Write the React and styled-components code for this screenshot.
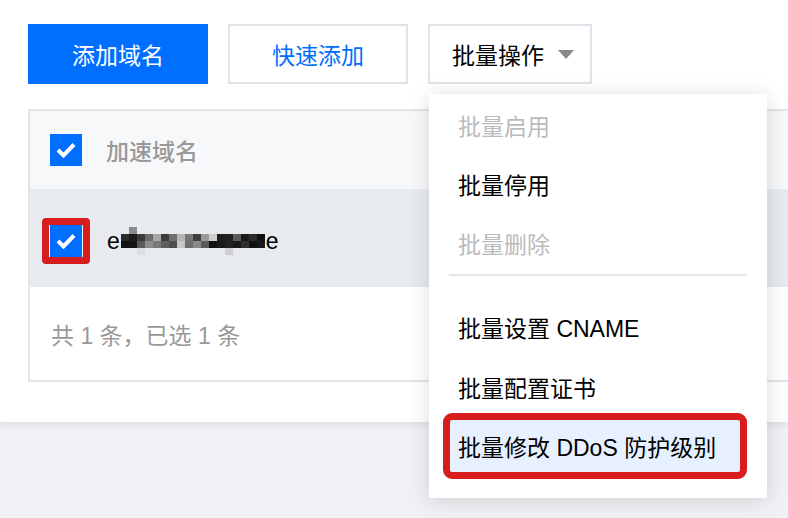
import React from "react";
import styled, { createGlobalStyle } from "styled-components";

const GlobalStyle = createGlobalStyle`
  html, body {
    margin: 0;
    background: #f0f1f4;
    overflow: hidden;
  }
  body {
    font-family: "Liberation Sans", "Noto Sans CJK SC", sans-serif;
  }
`;

const Page = styled.div`
  position: relative;
  height: 518px;
`;

const Panel = styled.div`
  background: #fff;
  height: 422px;
  box-sizing: border-box;
  padding: 24px 0 0 28px;
  box-shadow: 0 2px 8px rgba(0, 0, 0, 0.1);
  overflow: hidden;
`;

const Toolbar = styled.div`
  display: flex;
  gap: 20px;
  height: 60px;
`;

const Button = styled.button`
  height: 60px;
  width: ${(p) => p.$width || "180px"};
  box-sizing: border-box;
  border: ${(p) => (p.$primary ? "none" : "2px solid #dfe2e8")};
  background: ${(p) => (p.$primary ? "#006eff" : "#fff")};
  color: ${(p) => (p.$primary ? "#fff" : p.$dark ? "#000" : "#006eff")};
  font-family: inherit;
  font-size: 23px;
  display: flex;
  align-items: center;
  justify-content: ${(p) => (p.$left ? "flex-start" : "center")};
  padding: ${(p) => (p.$left ? "0 0 0 22px" : "0")};
  gap: 14px;
  cursor: pointer;
`;

const Caret = styled.span`
  width: 0;
  height: 0;
  border-left: 8px solid transparent;
  border-right: 8px solid transparent;
  border-top: 9px solid #888;
`;

const Table = styled.div`
  margin-top: 25px;
  width: 900px;
  border: 2px solid #e1e4e9;
  border-right: none;
`;

const HeadRow = styled.div`
  height: 78px;
  background: #f7f8fa;
  display: flex;
  align-items: center;
  padding-left: 20px;
  gap: 24px;
  color: #999;
  font-size: 23px;
  font-weight: 500;
`;

const BodyRow = styled.div`
  height: 98px;
  box-sizing: border-box;
  padding: 6px 0 0 20px;
  background: #e7eaef;
  display: flex;
  align-items: center;
  gap: 25px;
  font-size: 23px;
  color: #000;
`;

const FooterRow = styled.div`
  height: 93px;
  display: flex;
  align-items: center;
  padding-left: 21px;
  color: #999;
  font-size: 23px;
`;

const Marked = styled.span`
  display: inline-flex;
  border: 7px solid #d71d1d;
  border-radius: 4px;
  padding: 0 1px;
  margin: -7px -8px;
  background: #f4f6fa;
`;

const Domain = styled.span`
  display: flex;
  align-items: center;
`;

const Blur = styled.span`
  display: inline-grid;
  grid-template-columns: repeat(18, 8px);
  grid-auto-rows: 7px;
  margin: 0 1px 0 1px;
`;

const Pixel = styled.span`
  background: ${(p) => p.$c};
`;

const Menu = styled.div`
  position: absolute;
  top: 94px;
  left: 429px;
  width: 338px;
  background: #fff;
  box-shadow: 0 2px 20px rgba(0, 0, 0, 0.14);
  padding: 1px 0 26px;
  z-index: 10;
`;

const Item = styled.div`
  height: ${(p) => p.$h || 59}px;
  display: flex;
  align-items: center;
  padding-left: 29px;
  font-size: 23px;
  color: ${(p) => (p.$disabled ? "#bbb" : "#000")};
`;

const Divider = styled.div`
  height: 2px;
  margin: 2px 20px 21px;
  background: #e3e6eb;
`;

const Highlight = styled.div`
  height: 52px;
  margin: 3px 27px 0 21px;
  padding-left: 8px;
  display: flex;
  align-items: center;
  background: #e6f0fe;
  font-size: 23px;
  color: #000;
  outline: 7px solid #d71d1d;
  border-radius: 2px;
`;

function CheckBox() {
  return (
    <svg width="32" height="32" viewBox="0 0 32 32">
      <rect width="32" height="32" fill="#006eff" />
      <polyline
        points="8,16 13.5,21.5 24,10.5"
        fill="none"
        stroke="#fff"
        strokeWidth="4"
        strokeLinejoin="miter"
      />
    </svg>
  );
}

const T = "transparent";
const pixels = [
  [T, "#8a8a8a", T, T, T, T, T, T, T, T, T, T, T, T, T, T, T, T],
  ["#2a2a2a", "#1c1c1c", "#3a3a3a", "#6b6b6b", "#a8a8a8", "#3c3c3c", "#6f6f6f", "#b5b5b5", "#777", "#3e3e3e", "#9a9a9a", "#cfcfcf", "#1e1e1e", "#222", "#5a5a5a", "#1a1a1a", "#2b2b2b", "#111"],
  ["#111", "#151515", "#5a5a5a", "#8c8c8c", "#7a7a7a", "#5f5f5f", "#4d4d4d", "#c8c8c8", "#6e6e6e", "#888", "#5a5a5a", "#111", "#1a1a1a", "#222", "#181818", "#303030", "#111", "#1a1a1a"],
  [T, T, "#e0e0e0", T, T, T, T, T, T, T, T, T, T, "#cfcfcf", T, T, T, T],
];

export default function App() {
  return (
    <Page>
      <GlobalStyle />
      <Panel>
        <Toolbar>
          <Button $primary>添加域名</Button>
          <Button>快速添加</Button>
          <Button $dark $left $width="164px">
            批量操作 <Caret />
          </Button>
        </Toolbar>
        <Table>
          <HeadRow>
            <CheckBox />
            <span>加速域名</span>
          </HeadRow>
          <BodyRow>
            <Marked>
              <CheckBox />
            </Marked>
            <Domain>
              e
              <Blur>
                {pixels.flat().map((c, i) => (
                  <Pixel key={i} $c={c} />
                ))}
              </Blur>
              e
            </Domain>
          </BodyRow>
          <FooterRow>共 1 条，已选 1 条</FooterRow>
        </Table>
      </Panel>
      <Menu>
        <Item $disabled>批量启用</Item>
        <Item>批量停用</Item>
        <Item $disabled>批量删除</Item>
        <Divider />
        <Item $h={60}>批量设置 CNAME</Item>
        <Item $h={60}>批量配置证书</Item>
        <Highlight>批量修改 DDoS 防护级别</Highlight>
      </Menu>
    </Page>
  );
}
